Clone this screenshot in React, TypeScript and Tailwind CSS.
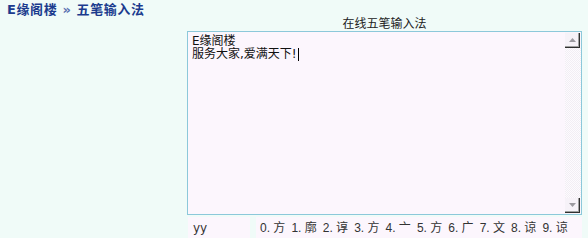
import React from "react";

const cjk = "font-['Tahoma','DejaVu_Sans','Noto_Sans_CJK_SC',sans-serif]";

const candidates = ["方", "廓", "谆", "方", "亠", "方", "广", "文", "谅", "谅"];

export default function App() {
  return (
    <div className={`w-[588px] h-[238px] overflow-hidden bg-[#f0fbf8] text-[12px] leading-[14px] ${cjk}`}>
      <div className="pl-[7px] pt-[3px] h-[17px] font-bold text-[#1b3b8e] text-[13px] leading-[13px] tracking-[0.6px]">
        E缘阁楼 <span className="text-[#5870b0]">»</span> 五笔输入法
      </div>
      <div className="ml-[187px] w-[395px]">
        <div className="h-[14px] text-center text-[#222] leading-[14px]">在线五笔输入法</div>
        <div className="h-[184px] border border-[#8cc8da] bg-[#fcf6fd] flex">
          <div className="flex-1 pl-[4px] pt-[3px] text-[#111] leading-[13px]">
            <div>E缘阁楼</div>
            <div className="flex items-center">
              服务大家,爱满天下!
              <span className="inline-block w-[1px] h-[13px] bg-black ml-[1px]" />
            </div>
          </div>
          <div className="w-[16px] flex flex-col bg-[#f9f5fb] py-[1px]">
            <div className="h-[15px] w-[15px] bg-[#f6f2f8] border-r border-b border-[#303030] shadow-[inset_-1px_-1px_0_#a0a0a0] flex items-center justify-center">
              <svg width="7" height="4" viewBox="0 0 7 4"><polygon points="3.5,0 7,4 0,4" fill="#9c9aa0" /></svg>
            </div>
            <div className="flex-1 bg-[repeating-conic-gradient(#f2eef4_0%_25%,#fdfbfe_0%_50%)] bg-[length:2px_2px]" />
            <div className="h-[15px] w-[15px] bg-[#f6f2f8] border-r border-b border-[#303030] shadow-[inset_-1px_-1px_0_#a0a0a0] flex items-center justify-center">
              <svg width="7" height="4" viewBox="0 0 7 4"><polygon points="0,0 7,0 3.5,4" fill="#9c9aa0" /></svg>
            </div>
          </div>
        </div>
        <div className="flex mt-[2px] h-[24px] gap-[6px]">
          <div className="w-[62px] ml-[1px] bg-[#fcf6fd] pl-[5px] pt-[4px] text-[#333]">yy</div>
          <div className="flex-1 bg-[#fcf6fd] pl-[4px] pt-[4px] text-[#333] whitespace-nowrap font-['Liberation_Sans','Noto_Sans_CJK_SC',sans-serif]">
            {candidates.map((c, i) => (
              <span key={i} className="mr-[6px]">
                {i}. {c}
              </span>
            ))}
          </div>
        </div>
      </div>
    </div>
  );
}
